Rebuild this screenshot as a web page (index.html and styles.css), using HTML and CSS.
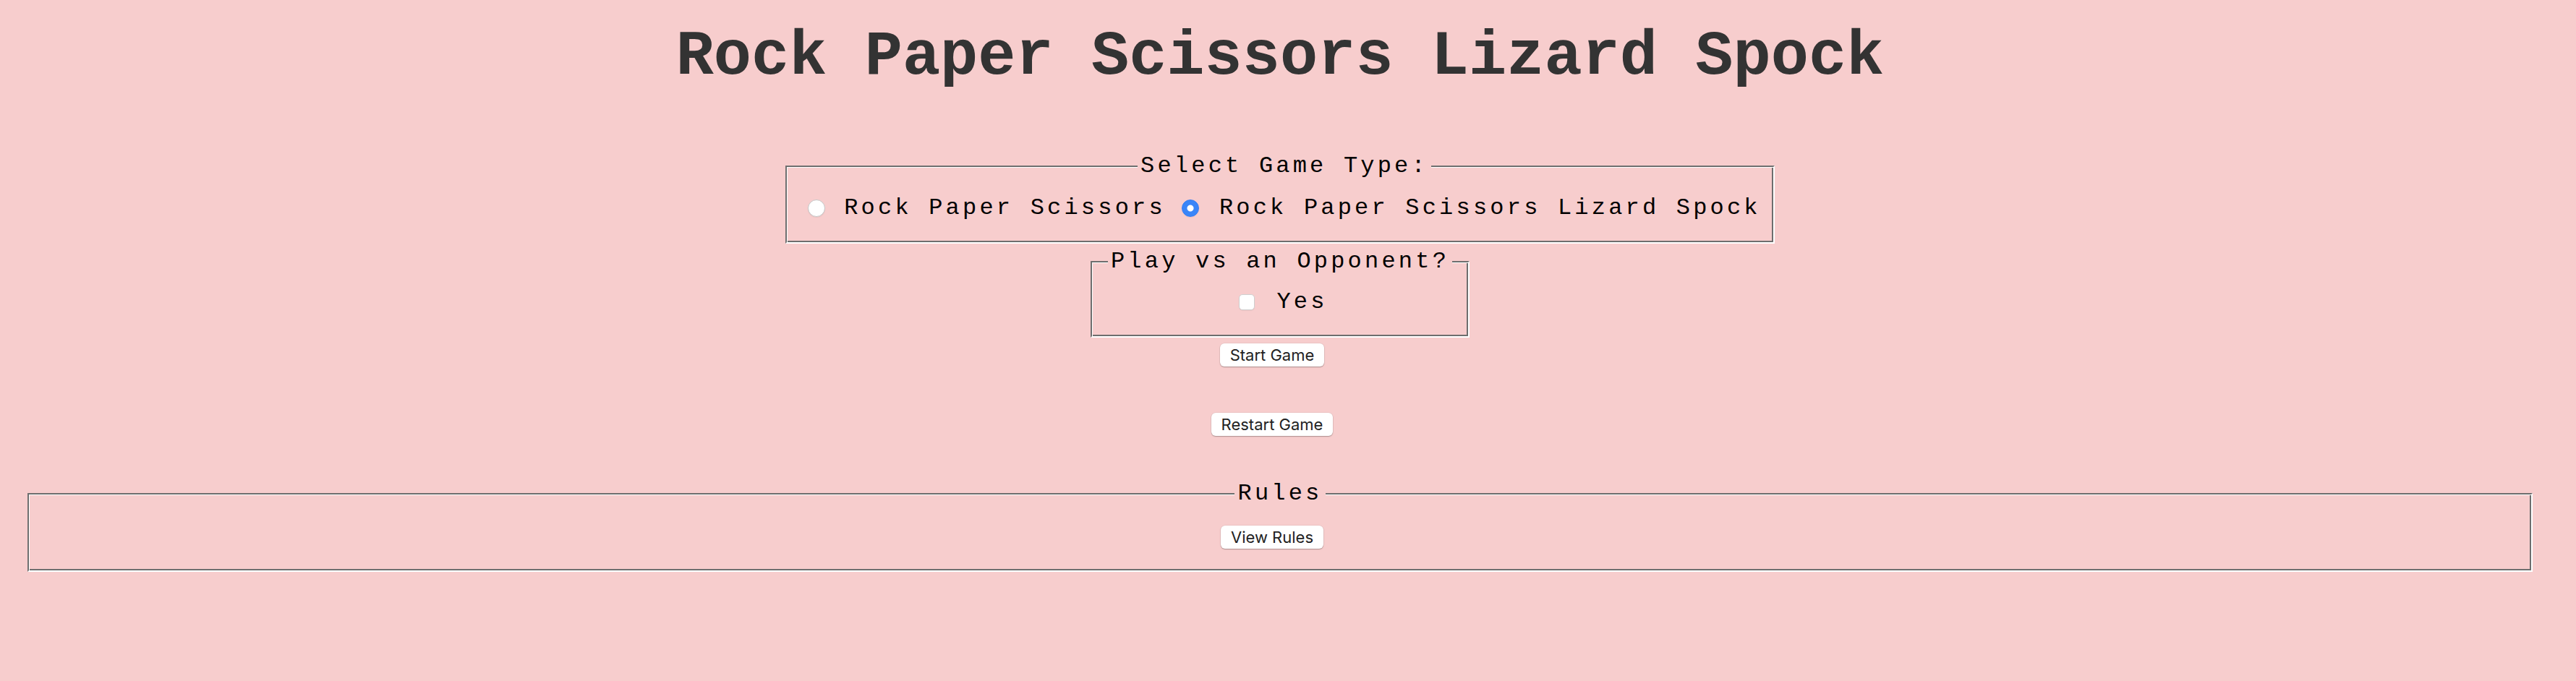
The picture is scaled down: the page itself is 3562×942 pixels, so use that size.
FILE: index.html
```html
<!DOCTYPE html>
<html lang="en">
<head>
<meta charset="utf-8">
<title>Rock Paper Scissors Lizard Spock</title>
<link rel="stylesheet" href="styles.css">
</head>
<body>
<main class="page">
  <h1 class="title">Rock Paper Scissors Lizard Spock</h1>

  <fieldset class="box box-type">
    <legend class="box-legend">Select Game Type:</legend>
    <div class="choice-row">
      <input class="radio" type="radio" name="gametype" id="rps">
      <label class="choice-label" for="rps">Rock Paper Scissors</label>
      <input class="radio radio-second" type="radio" name="gametype" id="rpsls" checked>
      <label class="choice-label" for="rpsls">Rock Paper Scissors Lizard Spock</label>
    </div>
  </fieldset>

  <fieldset class="box box-opponent">
    <legend class="box-legend">Play vs an Opponent?</legend>
    <div class="check-row">
      <input class="checkbox" type="checkbox" id="opp">
      <label class="choice-label" for="opp">Yes</label>
    </div>
  </fieldset>

  <div class="actions">
    <button class="btn btn-start" type="button">Start Game</button>
    <button class="btn btn-restart" type="button">Restart Game</button>
  </div>

  <fieldset class="box box-rules">
    <legend class="box-legend">Rules</legend>
    <div class="rules-row">
      <button class="btn" type="button">View Rules</button>
    </div>
  </fieldset>
</main>
</body>
</html>
```

FILE: styles.css
```css
html, body {
  margin: 0;
  padding: 0;
  background: #f7cdcd;
}

body {
  width: 3562px;
  height: 942px;
  overflow: hidden;
  font-family: "Liberation Mono", "Courier New", monospace;
  color: #000;
}

.page {
  width: 3540px;
  display: flex;
  flex-direction: column;
}

.title {
  margin: 29px 0 0;
  height: 100px;
  font-family: "Liberation Mono", "Courier New", monospace;
  font-weight: 700;
  font-size: 87px;
  line-height: 100px;
  color: #333;
  text-align: center;
}

.box {
  margin: 0;
  border-style: solid;
  border-width: 2px;
  border-color: #6e6e6e #fff #fff #6e6e6e;
  box-shadow: inset 1px 1px 0 #fff, inset -2px -2px 0 #6e6e6e;
  min-inline-size: 0;
}

.box-legend {
  margin: 0 auto;
  padding: 0 4px;
  font-size: 32px;
  line-height: 36px;
  letter-spacing: 4.2px;
  background: #f7cdcd;
  color: #000;
}

.box-type {
  align-self: center;
  width: fit-content;
  margin-top: 83px;
  padding: 22px 17px 29px 29px;
}

.choice-row {
  display: flex;
  align-items: center;
  height: 36px;
}

.choice-label {
  font-size: 32px;
  line-height: 36px;
  letter-spacing: 4.2px;
  white-space: nowrap;
  color: #000;
}

.radio {
  appearance: none;
  -webkit-appearance: none;
  flex: none;
  width: 24px;
  height: 24px;
  margin: 0 26px 0 0;
  border: 1px solid #c6c6c6;
  border-radius: 50%;
  background: #fff;
  box-shadow: 0 1px 1px rgba(0, 0, 0, 0.06);
}

.radio-second {
  margin-left: 22px;
  margin-right: 28px;
}

.radio:checked {
  border-color: #2f7cf6;
  background: radial-gradient(circle, #fff 0 4px, #3a85f8 5px);
}

.box-opponent {
  align-self: center;
  width: fit-content;
  margin-top: 7px;
  padding: 20px 22px 29px;
}

.check-row {
  display: flex;
  align-items: center;
  justify-content: center;
  height: 36px;
}

.checkbox {
  appearance: none;
  -webkit-appearance: none;
  flex: none;
  width: 22px;
  height: 22px;
  margin: 0 30px 0 9px;
  border: 1px solid #cfcfcf;
  border-radius: 5px;
  background: #fff;
  box-shadow: 0 1px 1px rgba(0, 0, 0, 0.05);
}

.actions {
  display: flex;
  flex-direction: column;
  align-items: center;
}

.btn {
  height: 32px;
  padding: 0 14px;
  margin: 0 22px 0 0;
  border: none;
  border-radius: 6px;
  background: #fff;
  color: #222;
  font-family: Inter, "Noto Sans", sans-serif;
  font-size: 22px;
  line-height: 32px;
  box-shadow: 0 1px 1.5px rgba(0, 0, 0, 0.28), 0 0 0 0.5px rgba(0, 0, 0, 0.08);
  cursor: pointer;
}

.btn-start {
  margin-top: 8px;
}

.btn-restart {
  margin-top: 64px;
}

.box-rules {
  margin: 62px 38px 0;
  padding: 26px 0 30px;
}

.rules-row {
  display: flex;
  justify-content: center;
}
```
